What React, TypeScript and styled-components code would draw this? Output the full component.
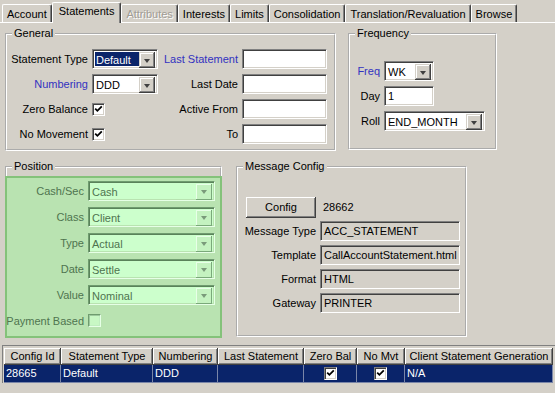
import React from 'react';
import styled, { createGlobalStyle, css } from 'styled-components';

const Global = createGlobalStyle`
  html, body { margin: 0; padding: 0; background: #d4d0c8; }
  #root { width: 555px; height: 393px; }
`;

const Window = styled.div`
  width: 555px;
  height: 393px;
  overflow: hidden;
  background: #d4d0c8;
  color: #000;
  font-family: "Liberation Sans", Arial, sans-serif;
  font-size: 11px;
`;

const TabBar = styled.div`
  display: flex;
  align-items: flex-end;
  height: 23px;
  box-sizing: border-box;
  padding-left: 2px;
  border-bottom: 1px solid #fff;
`;

const Tab = styled.div<{ $active?: boolean; $disabled?: boolean }>`
  height: 18px;
  box-sizing: border-box;
  padding: 2px 4px 0 4px;
  line-height: 14px;
  border-top: 1px solid #fff;
  border-left: 1px solid #fff;
  border-right: 1px solid #404040;
  box-shadow: inset -1px 0 #808080;
  border-radius: 2px 2px 0 0;
  white-space: nowrap;
  color: ${(p) => (p.$disabled ? '#a09c94' : '#000')};
  ${(p) => p.$disabled && css`text-shadow: 1px 1px 0 #fff;`}
  ${(p) =>
    p.$active &&
    css`
      height: 21px;
      margin-bottom: -1px;
      padding: 1px 6px 0 6px;
      background: #d4d0c8;
      position: relative;
      z-index: 1;
    `}
`;

const Row = styled.div<{ $top: number; $gap: number }>`
  display: flex;
  align-items: flex-start;
  margin-top: ${(p) => p.$top}px;
  padding-left: 5px;
  gap: ${(p) => p.$gap}px;
`;

const GroupBox = styled.fieldset<{ $w: number; $h: number }>`
  margin: 0;
  padding: 0;
  width: ${(p) => p.$w}px;
  height: ${(p) => p.$h}px;
  box-sizing: border-box;
  min-inline-size: 0;
  border: 2px groove #ffffff;
`;

const Legend = styled.legend`
  margin-left: 5px;
  padding: 0 2px;
  line-height: 13px;
  font-weight: normal;
`;

const FormGrid = styled.div<{ $cols: string; $pad: string; $rowGap: number; $rowH: number }>`
  display: grid;
  grid-template-columns: ${(p) => p.$cols};
  grid-auto-rows: ${(p) => p.$rowH}px;
  column-gap: 4px;
  row-gap: ${(p) => p.$rowGap}px;
  padding: ${(p) => p.$pad};
  align-items: center;
`;

const Label = styled.span<{ $tone?: 'blue' | 'green' }>`
  justify-self: end;
  white-space: nowrap;
  color: ${(p) => (p.$tone === 'blue' ? '#3232c0' : p.$tone === 'green' ? '#4f744f' : '#000')};
`;

const ComboBox = styled.div<{ $w: number; $green?: boolean }>`
  display: flex;
  width: ${(p) => p.$w}px;
  height: 20px;
  box-sizing: border-box;
  padding: 1px;
  border: 1px solid;
  border-color: ${(p) => (p.$green ? '#6f9c6f #e6ffe6 #e6ffe6 #6f9c6f' : '#808080 #fff #fff #808080')};
  box-shadow: ${(p) => (p.$green ? 'inset 1px 1px #5a825a, inset -1px -1px #b9e3b1' : 'inset 1px 1px #404040, inset -1px -1px #d4d0c8')};
  background: ${(p) => (p.$green ? '#ccffcc' : '#fff')};
`;

const ComboText = styled.div<{ $sel?: boolean; $green?: boolean }>`
  flex: 1;
  margin: 1px 0 1px 1px;
  padding-left: 1px;
  line-height: 16px;
  white-space: nowrap;
  overflow: hidden;
  color: ${(p) => (p.$sel ? '#fff' : p.$green ? '#4f744f' : '#000')};
  background: ${(p) => (p.$sel ? '#0a246a' : 'transparent')};
`;

const DropButton = styled.div<{ $green?: boolean }>`
  width: 16px;
  height: 16px;
  margin: 1px 1px 1px 0;
  box-sizing: border-box;
  display: flex;
  align-items: center;
  justify-content: center;
  background: ${(p) => (p.$green ? '#c4f2c0' : '#d4d0c8')};
  box-shadow: ${(p) =>
    p.$green
      ? 'inset -1px -1px #7aa87a, inset 1px 1px #e8ffe8'
      : 'inset -1px -1px #404040, inset 1px 1px #d4d0c8, inset -2px -2px #808080, inset 2px 2px #fff'};
  &::after {
    content: '';
    width: 0;
    height: 0;
    border-left: 3.5px solid transparent;
    border-right: 3.5px solid transparent;
    border-top: 4px solid ${(p) => (p.$green ? '#7a9a7a' : '#404040')};
    margin-top: 1px;
  }
`;

const TextField = styled.div<{ $w: number; $disabled?: boolean }>`
  width: ${(p) => p.$w}px;
  height: 20px;
  box-sizing: border-box;
  padding: 0 3px;
  line-height: 18px;
  white-space: nowrap;
  overflow: hidden;
  border: 1px solid;
  border-color: #808080 #fff #fff #808080;
  box-shadow: inset 1px 1px #404040, inset -1px -1px #d4d0c8;
  background: ${(p) => (p.$disabled ? '#d4d0c8' : '#fff')};
`;

const CheckBoxBox = styled.div<{ $green?: boolean }>`
  width: 13px;
  height: 13px;
  box-sizing: border-box;
  display: flex;
  align-items: center;
  justify-content: center;
  border: 1px solid;
  border-color: ${(p) => (p.$green ? '#6f9c6f #e6ffe6 #e6ffe6 #6f9c6f' : '#808080 #fff #fff #808080')};
  box-shadow: ${(p) => (p.$green ? 'inset 1px 1px #9cc89c, inset -1px -1px #c0eec0' : 'inset 1px 1px #404040, inset -1px -1px #d4d0c8')};
  background: ${(p) => (p.$green ? '#c8f8c4' : '#fff')};
`;

const Check = ({ checked, green }: { checked?: boolean; green?: boolean }) => (
  <CheckBoxBox $green={green}>
    {checked && (
      <svg width="9" height="9" viewBox="0 0 9 9">
        <path d="M1.2 3.6 L3.4 5.8 L7.8 1.4" fill="none" stroke="#000" strokeWidth="1.8" />
      </svg>
    )}
  </CheckBoxBox>
);

const Combo = ({ w, value, sel, green }: { w: number; value: string; sel?: boolean; green?: boolean }) => (
  <ComboBox $w={w} $green={green}>
    <ComboText $sel={sel} $green={green}>{value}</ComboText>
    <DropButton $green={green} />
  </ComboBox>
);

const GreenPanel = styled.div`
  margin: 3px -2px -2px -2px;
  height: 162px;
  box-sizing: border-box;
  background: #b9e3b1;
  border: 2px solid #84c27a;
`;

const Button = styled.div`
  width: 70px;
  height: 21px;
  box-sizing: border-box;
  display: flex;
  align-items: center;
  justify-content: center;
  background: #d4d0c8;
  box-shadow: inset -1px -1px #404040, inset 1px 1px #fff, inset -2px -2px #808080;
`;

const Plain = styled.span`
  white-space: nowrap;
  padding-left: 3px;
`;

const TableFrame = styled.div`
  margin: 8px 0 0 2px;
  border-top: 1px solid #808080;
  border-left: 1px solid #808080;
  padding: 2px 0 0 1px;
`;

const GridRow = styled.div`
  display: grid;
  grid-template-columns: 57px 92px 65px 86px 53px 48px 148px;
`;

const HeadCell = styled.div`
  height: 17px;
  line-height: 17px;
  text-align: center;
  white-space: nowrap;
  overflow: hidden;
  background: #d4d0c8;
  box-shadow: inset -1px -1px #404040, inset 1px 1px #fff, inset -2px -2px #808080;
`;

const BodyCell = styled.div<{ $center?: boolean }>`
  height: 18px;
  box-sizing: border-box;
  line-height: 17px;
  padding-left: 2px;
  white-space: nowrap;
  color: #fff;
  background: #0a246a;
  border-right: 1px solid #7a86a8;
  border-bottom: 1px solid #7a86a8;
  ${(p) =>
    p.$center &&
    css`
      display: flex;
      align-items: center;
      justify-content: center;
      padding-left: 0;
    `}
`;

const tabs = [
  'Account',
  'Statements',
  'Attributes',
  'Interests',
  'Limits',
  'Consolidation',
  'Translation/Revaluation',
  'Browse',
];

const headers = ['Config Id', 'Statement Type', 'Numbering', 'Last Statement', 'Zero Bal', 'No Mvt', 'Client Statement Generation'];

export default function App() {
  return (
    <Window>
      <Global />
      <TabBar>
        {tabs.map((t) => (
          <Tab key={t} $active={t === 'Statements'} $disabled={t === 'Attributes'}>
            {t}
          </Tab>
        ))}
      </TabBar>

      <Row $top={4} $gap={12}>
        <GroupBox $w={331} $h={124}>
          <Legend>General</Legend>
          <FormGrid $cols="81px 66px 76px 85px" $pad="9px 0 0 0" $rowGap={5} $rowH={20}>
            <Label>Statement Type</Label>
            <Combo w={66} value="Default" sel />
            <Label $tone="blue">Last Statement</Label>
            <TextField $w={85} />

            <Label $tone="blue">Numbering</Label>
            <Combo w={66} value="DDD" />
            <Label>Last Date</Label>
            <TextField $w={85} />

            <Label>Zero Balance</Label>
            <Check checked />
            <Label>Active From</Label>
            <TextField $w={85} />

            <Label>No Movement</Label>
            <Check checked />
            <Label>To</Label>
            <TextField $w={85} />
          </FormGrid>
        </GroupBox>

        <GroupBox $w={149} $h={123}>
          <Legend>Frequency</Legend>
          <FormGrid $cols="30px auto" $pad="21px 0 0 0" $rowGap={5} $rowH={20}>
            <Label $tone="blue">Freq</Label>
            <Combo w={50} value="WK" />
            <Label>Day</Label>
            <TextField $w={50}>1</TextField>
            <Label>Roll</Label>
            <Combo w={101} value="END_MONTH" />
          </FormGrid>
        </GroupBox>
      </Row>

      <Row $top={9} $gap={14}>
        <GroupBox $w={217} $h={177}>
          <Legend>Position</Legend>
          <GreenPanel>
            <FormGrid $cols="75px 127px" $pad="2px 0 0 2px" $rowGap={5} $rowH={21}>
              <Label $tone="green">Cash/Sec</Label>
              <Combo w={127} value="Cash" green />
              <Label $tone="green">Class</Label>
              <Combo w={127} value="Client" green />
              <Label $tone="green">Type</Label>
              <Combo w={127} value="Actual" green />
              <Label $tone="green">Date</Label>
              <Combo w={127} value="Settle" green />
              <Label $tone="green">Value</Label>
              <Combo w={127} value="Nominal" green />
              <Label $tone="green">Payment Based</Label>
              <Check green />
            </FormGrid>
          </GreenPanel>
        </GroupBox>

        <GroupBox $w={231} $h={177}>
          <Legend>Message Config</Legend>
          <FormGrid $cols="70px 140px" $pad="24px 0 0 8px" $rowGap={4} $rowH={20}>
            <Button>Config</Button>
            <Plain>28662</Plain>
            <Label>Message Type</Label>
            <TextField $w={140} $disabled>ACC_STATEMENT</TextField>
            <Label>Template</Label>
            <TextField $w={140} $disabled>CallAccountStatement.html</TextField>
            <Label>Format</Label>
            <TextField $w={140} $disabled>HTML</TextField>
            <Label>Gateway</Label>
            <TextField $w={140} $disabled>PRINTER</TextField>
          </FormGrid>
        </GroupBox>
      </Row>

      <TableFrame>
        <GridRow>
          {headers.map((h) => (
            <HeadCell key={h}>{h}</HeadCell>
          ))}
        </GridRow>
        <GridRow>
          <BodyCell>28665</BodyCell>
          <BodyCell>Default</BodyCell>
          <BodyCell>DDD</BodyCell>
          <BodyCell />
          <BodyCell $center>
            <Check checked />
          </BodyCell>
          <BodyCell $center>
            <Check checked />
          </BodyCell>
          <BodyCell>N/A</BodyCell>
        </GridRow>
      </TableFrame>
    </Window>
  );
}
